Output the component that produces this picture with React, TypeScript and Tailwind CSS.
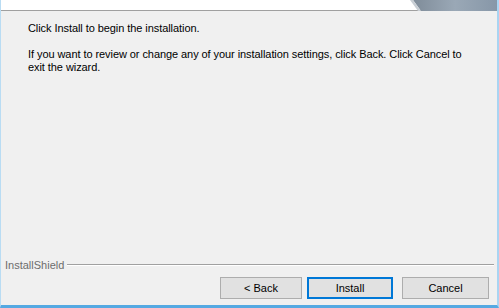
export default function App() {
  return (
    <div
      className="w-[499px] h-[308px] flex flex-col bg-[#f0f0f0] border-l border-r-2 border-b-[3px] border-l-[#b9dcf3] border-r-[#a9d4f2] border-b-[#55a9e2] overflow-hidden"
      style={{ fontFamily: '"Liberation Sans", Arial, sans-serif' }}
    >
      {/* banner strip */}
      <div className="relative h-[11px] shrink-0 bg-white border-b border-[#a0a0a0]">
        <svg className="absolute right-0 top-0" width="90" height="11" viewBox="0 0 90 11">
          <defs>
            <linearGradient id="g" x1="0" y1="0" x2="1" y2="0">
              <stop offset="0" stopColor="#7f8c99" />
              <stop offset="0.5" stopColor="#9aa8b6" />
              <stop offset="1" stopColor="#8797a8" />
            </linearGradient>
          </defs>
          <path d="M6 0 H90 V11 H14 Z" fill="url(#g)" />
          <path d="M6 0 L14 11 H11 L3 0 Z" fill="#c8ced4" />
        </svg>
      </div>

      <div className="flex-1 pl-[27px] pr-[20px] pt-[11px] text-[11px] text-black tracking-[-0.07px]">
        <p className="leading-[13px]">Click Install to begin the installation.</p>
        <p className="mt-[13px] leading-[13px]">
          If you want to review or change any of your installation settings, click Back. Click Cancel to exit the wizard.
        </p>
      </div>

      <div className="flex items-center gap-[3px] pl-[4px] pr-[3px] text-[11px] text-[#6d6d6d]">
        <span>InstallShield</span>
        <div className="flex-1 flex flex-col">
          <div className="h-px bg-[#a0a0a0]" />
          <div className="h-px bg-white" />
        </div>
      </div>

      <div className="flex justify-end pr-[8px] pt-[4px] pb-[6px] text-[11px] text-black">
        <button className="w-[82px] h-[22px] bg-[#e1e1e1] border border-[#adadad]">&lt; Back</button>
        <button className="ml-[5px] w-[86px] h-[22px] bg-[#e1e1e1] border-2 border-[#0078d7]">Install</button>
        <button className="ml-[9px] w-[87px] h-[22px] bg-[#e1e1e1] border border-[#adadad]">Cancel</button>
      </div>
    </div>
  );
}
